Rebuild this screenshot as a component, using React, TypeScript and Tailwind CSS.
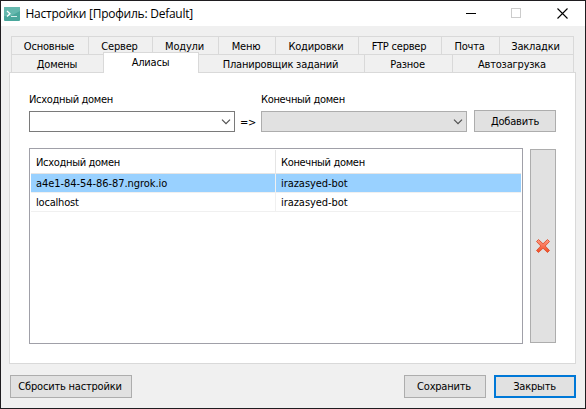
import React from "react";

type TabItem = { label: string; width: string };

const upperTabs: TabItem[] = [
  { label: "Основные", width: "w-[77px]" },
  { label: "Сервер", width: "w-[64px]" },
  { label: "Модули", width: "w-[66px]" },
  { label: "Меню", width: "w-[57px]" },
  { label: "Кодировки", width: "w-[83px]" },
  { label: "FTP сервер", width: "w-[83px]" },
  { label: "Почта", width: "w-[58px]" },
  { label: "Закладки", width: "w-[74px]" },
];

const lowerTabs: TabItem[] = [
  { label: "Планировщик заданий", width: "w-[166px]" },
  { label: "Разное", width: "w-[88px]" },
  { label: "Автозагрузка", width: "w-[121px]" },
];

function Tab({ label, width }: TabItem) {
  return (
    <div className={`${width} flex h-[18px] shrink-0 items-center justify-center border-r border-[#d9d9d9] pr-[2px] pt-px`}>
      <span>{label}</span>
    </div>
  );
}

function Combo({ disabled = false }: { disabled?: boolean }) {
  return (
    <div
      className={`flex h-[21px] w-[206px] items-center justify-end border pr-[3px] ${
        disabled ? "border-[#adadad] bg-[#e1e1e1]" : "border-[#7a7a7a] bg-white"
      }`}
    >
      <svg width="10" height="6" viewBox="0 0 10 6" fill="none" stroke="#505050" strokeWidth="1.2">
        <path d="M1 .7 5 4.7 9 .7" />
      </svg>
    </div>
  );
}

function TitleBar() {
  return (
    <header className="flex h-[25px] items-center bg-white">
      <svg className="ml-[3px]" width="16" height="14" viewBox="0 0 16 14">
        <rect width="16" height="14" rx="1" fill="#4aa79c" />
        <path d="M0 1a1 1 0 0 1 1-1h14a1 1 0 0 1 1 1v3L7 9H0z" fill="#65b8ae" />
        <path d="m3 4 3 2.7L3 9.5" fill="none" stroke="#fff" strokeWidth="1.3" />
        <path d="M7 9.5h6" stroke="#d5eeea" />
      </svg>
      <h1 className="ml-[5.5px] whitespace-pre font-['Open_Sans','Noto_Sans',sans-serif] text-[12px] leading-[16px] tracking-[-0.25px]">
        Настройки [Профиль: Default]
      </h1>
      <div className="ml-auto mr-[17px] flex items-center gap-[35px]">
        <svg width="10" height="11" stroke="#000" shapeRendering="crispEdges">
          <path d="M0 5.5h10" />
        </svg>
        <svg className="mr-px" width="10" height="11" fill="none" stroke="#ccc" shapeRendering="crispEdges">
          <path d="M.5.5h9v9h-9z" />
        </svg>
        <svg width="11" height="11" fill="none" stroke="#000" strokeWidth="1.1">
          <path d="m.5.5 10 10m0-10-10 10" />
        </svg>
      </div>
    </header>
  );
}

function DeleteIcon() {
  return (
    <svg width="14" height="14" viewBox="0 0 14 14">
      <defs>
        <linearGradient id="cross" x1="0" y1="0" x2="0" y2="1">
          <stop offset="0" stopColor="#ff9a80" />
          <stop offset=".5" stopColor="#fa7355" />
          <stop offset="1" stopColor="#f04a20" />
        </linearGradient>
      </defs>
      <path
        d="M2.5.5 7 4.8 11.5.5l2 2L9.2 7l4.3 4.5-2 2L7 9.2l-4.5 4.3-2-2L4.8 7 .5 2.5z"
        fill="url(#cross)"
        stroke="#dc512f"
        strokeWidth=".9"
      />
    </svg>
  );
}

const button = "flex items-center justify-center border border-[#adadad] bg-[#e1e1e1]";

export default function App() {
  return (
    <div className="flex h-[409px] w-[586px] flex-col overflow-hidden whitespace-nowrap border border-[#1f1d20] bg-[#f0f0f0] font-['DejaVu_Sans_Condensed','DejaVu_Sans',sans-serif] text-[11px] leading-[14px] tracking-[-0.2px] text-black">
      <TitleBar />

      <nav className="ml-[10px] mt-[10px] w-[563px]">
        <div className="flex h-[18px] border-l border-t border-[#d9d9d9]">
          {upperTabs.map((tab) => (
            <Tab key={tab.label} {...tab} />
          ))}
        </div>
        <div className="flex h-[18px] border-l border-[#d9d9d9]">
          <div className="flex w-[91px] items-center justify-center border-t border-[#d9d9d9] pr-px pt-[2px]">Домены</div>
          <div className="relative z-10 -mt-[2px] flex h-[21px] w-[96px] items-center justify-center border-x border-t border-[#d9d9d9] bg-white pb-px pr-px">
            Алиасы
          </div>
          <div className="flex border-t border-[#d9d9d9]">
            {lowerTabs.map((tab) => (
              <Tab key={tab.label} {...tab} />
            ))}
          </div>
        </div>
      </nav>

      <main className="ml-[8px] h-[292px] w-[567px] border border-[#d9d9d9] bg-white pl-[19px] pt-[20px]">
        <div className="flex h-[39px] items-end">
          <div className="flex h-[39px] w-[206px] flex-col justify-between tracking-[-0.32px]">
            <label>Исходный домен</label>
            <Combo />
          </div>
          <span className="w-[26px] pb-[2px] text-center">=&gt;</span>
          <div className="flex h-[39px] w-[206px] flex-col justify-between tracking-[-0.32px]">
            <label>Конечный домен</label>
            <Combo disabled />
          </div>
          <button className={`${button} ml-[7px] h-[22px] w-[82px] pt-[2px]`}>Добавить</button>
        </div>

        <div className="mt-[16px] flex items-center gap-[7px]">
          <div className="h-[196px] w-[494px] border border-[#a0a0a8] bg-white p-px pr-0">
            <div className="grid h-[24px] w-[490px] grid-cols-[245px_245px] border-b border-[#e5e5e5] tracking-[-0.32px]">
              <div className="border-r border-[#e5e5e5] pl-[5px] pt-[6px]">Исходный домен</div>
              <div className="pl-[5px] pt-[6px]">Конечный домен</div>
            </div>
            <div className="grid h-[19px] w-[490px] grid-cols-[245px_245px] border-b border-[#f0f0f0] bg-[#99d1ff] bg-clip-padding">
              <div className="border-r border-[#f0f0f0] pl-[5px] pt-[3px] tracking-[-0.06px]">a4e1-84-54-86-87.ngrok.io</div>
              <div className="pl-[5px] pt-[3px] tracking-[-0.05px]">irazasyed-bot</div>
            </div>
            <div className="grid h-[19px] w-[490px] grid-cols-[245px_245px] border-b border-[#f0f0f0]">
              <div className="border-r border-[#f0f0f0] pl-[5px] pt-[3px]">localhost</div>
              <div className="pl-[5px] pt-[3px] tracking-[-0.05px]">irazasyed-bot</div>
            </div>
          </div>
          <button className={`${button} h-[194px] w-[26px]`} aria-label="Удалить">
            <DeleteIcon />
          </button>
        </div>
      </main>

      <footer className="ml-[9px] mt-[11px] flex w-[566px]">
        <button className={`${button} h-[23px] w-[122px] pr-[2px] pt-px`}>Сбросить настройки</button>
        <button className={`${button} ml-auto h-[23px] w-[82px] pr-[2px] pt-px`}>Сохранить</button>
        <button className="ml-[8px] flex h-[23px] w-[82px] items-center justify-center border-2 border-[#0078d7] bg-[#e1e1e1] pr-px pt-px">
          Закрыть
        </button>
      </footer>
    </div>
  );
}
